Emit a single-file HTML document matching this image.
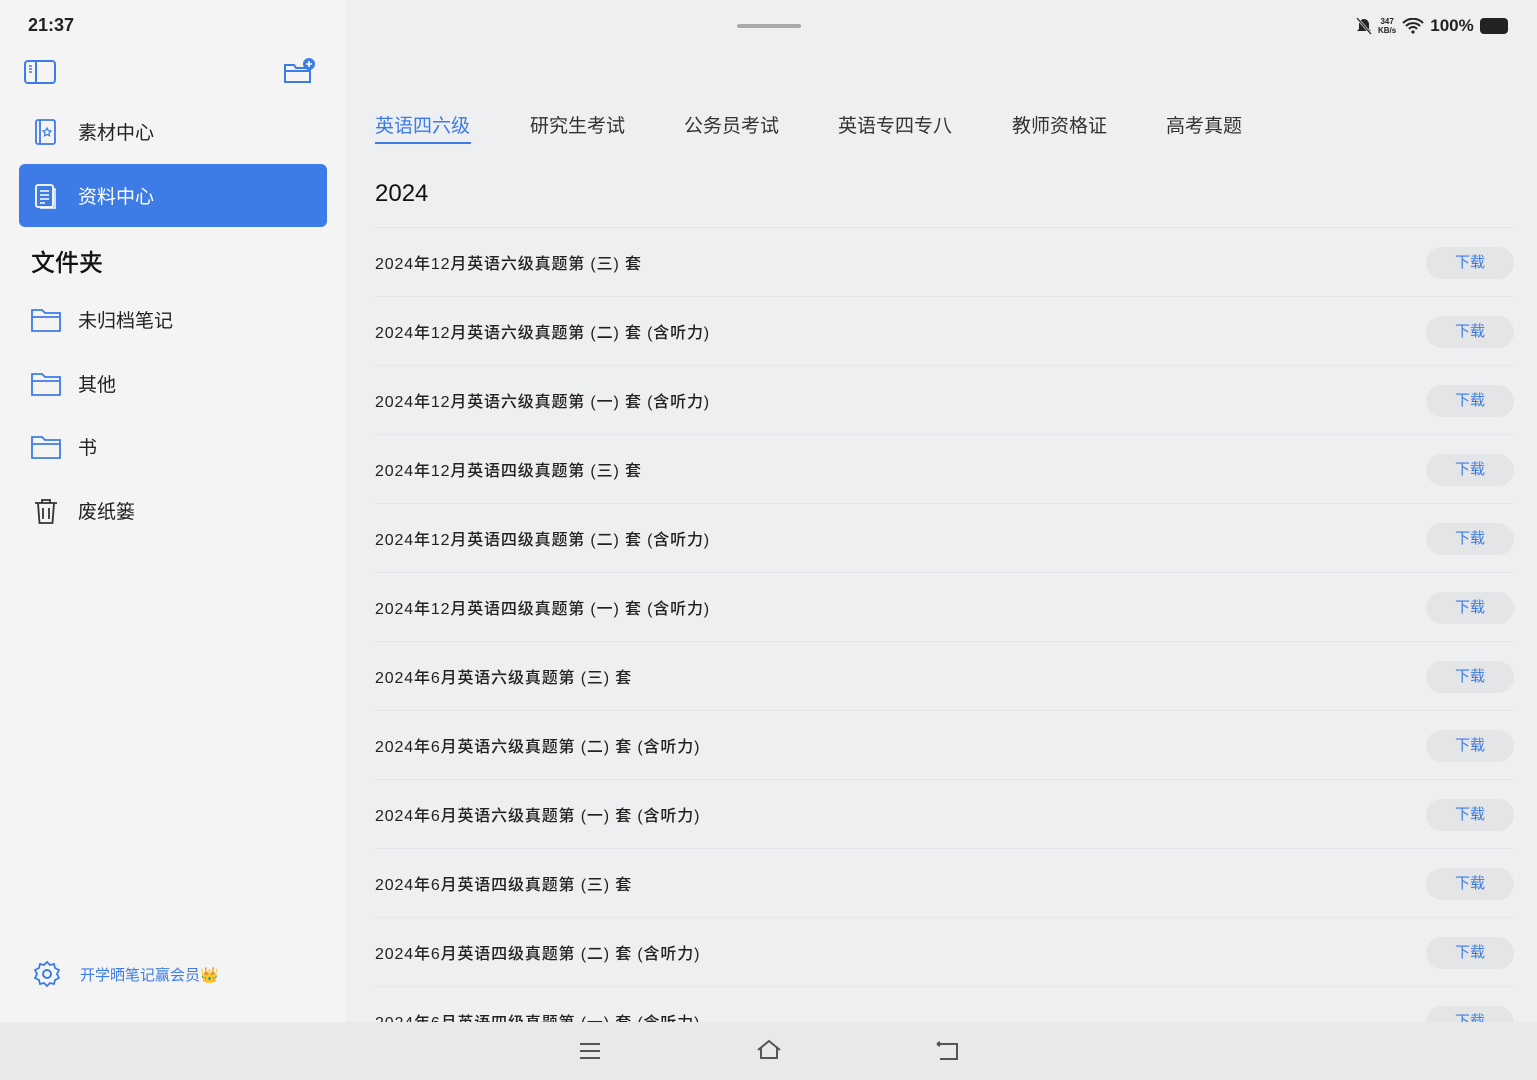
<!DOCTYPE html>
<html><head><meta charset="utf-8"><style>
*{margin:0;padding:0;box-sizing:border-box}
body{width:1537px;height:1080px;overflow:hidden;font-family:"Liberation Sans","Noto Sans CJK SC",sans-serif;background:#eeeff1;position:relative;color:#222}
.side{position:absolute;left:0;top:0;width:346px;height:1022px;background:#f4f4f5}
.abs{position:absolute}
.item{position:absolute;left:19px;width:308px;height:63px;display:flex;align-items:center;font-size:19px;color:#222}
.item svg{margin-left:13px;margin-right:20px}
.sel{background:#3d7be6;border-radius:6px;color:#fff}
.tabs span{position:absolute;top:111px;font-size:19px;color:#333}
.row{position:absolute;left:375px;width:1139px;height:69px;border-top:1px solid #e4e5e8}
.row .t{position:absolute;left:0;top:22px;font-size:16px;color:#222;letter-spacing:.85px;font-weight:500}
.row .b{position:absolute;right:0;top:19px;width:88px;height:32px;border-radius:16px;background:#e4e5e7;color:#3d7be6;font-size:15px;text-align:center;line-height:32px}
.nav{position:absolute;left:0;top:1022px;width:1537px;height:58px;background:#e9e9ea}
</style></head><body>
<div class="side">
<div class="abs" style="left:28px;top:15px;font-size:18px;font-weight:bold;color:#222">21:37</div>
<svg class="abs" style="left:24px;top:60px" width="32" height="24" viewBox="0 0 32 24"><rect x="1" y="1" width="30" height="22" rx="3" fill="none" stroke="#3d7be6" stroke-width="2"/><line x1="12" y1="1" x2="12" y2="23" stroke="#3d7be6" stroke-width="2"/><line x1="5" y1="6" x2="8" y2="6" stroke="#3d7be6" stroke-width="1.5"/><line x1="5" y1="9" x2="8" y2="9" stroke="#3d7be6" stroke-width="1.5"/><line x1="5" y1="12" x2="8" y2="12" stroke="#3d7be6" stroke-width="1.5"/></svg>
<svg class="abs" style="left:282px;top:57px" width="36" height="28" viewBox="0 0 36 28"><path d="M3 8h9l2 3h14v14H3z" fill="none" stroke="#3d7be6" stroke-width="2"/><line x1="3" y1="14" x2="28" y2="14" stroke="#3d7be6" stroke-width="2"/><circle cx="27" cy="7" r="6" fill="#3d7be6"/><path d="M27 4v6M24 7h6" stroke="#fff" stroke-width="1.6"/></svg>
<div class="item" style="top:100px"><svg width="26" height="28" viewBox="0 0 26 28"><rect x="4" y="2" width="19" height="24" rx="2" fill="none" stroke="#3d7be6" stroke-width="1.8"/><line x1="8" y1="2" x2="8" y2="26" stroke="#3d7be6" stroke-width="1.8"/><path d="M15 10l1.3 2.6 2.7.4-2 2 .5 2.8-2.5-1.3-2.5 1.3.5-2.8-2-2 2.7-.4z" fill="none" stroke="#3d7be6" stroke-width="1.2"/></svg>素材中心</div>
<div class="item sel" style="top:164px"><svg width="26" height="28" viewBox="0 0 26 28"><rect x="4" y="3" width="17" height="22" rx="2" fill="none" stroke="#fff" stroke-width="1.8"/><path d="M21 7h2v19H8" fill="none" stroke="#fff" stroke-width="1.5"/><path d="M8 9h9M8 13h9M8 17h9M8 21h5" stroke="#fff" stroke-width="1.5"/></svg>资料中心</div>
<div class="abs" style="left:31px;top:243px;font-size:24px;font-weight:500;color:#111">文件夹</div>
<div class="item" style="top:288px;left:19px"><svg width="32" height="26" viewBox="0 0 32 26" style="margin-left:11px;margin-right:16px"><path d="M2 3h10l3 3h15v18H2z" fill="none" stroke="#3d7be6" stroke-width="1.8"/><line x1="2" y1="10" x2="30" y2="10" stroke="#3d7be6" stroke-width="1.8"/></svg>未归档笔记</div>
<div class="item" style="top:352px"><svg width="32" height="26" viewBox="0 0 32 26" style="margin-left:11px;margin-right:16px"><path d="M2 3h10l3 3h15v18H2z" fill="none" stroke="#3d7be6" stroke-width="1.8"/><line x1="2" y1="10" x2="30" y2="10" stroke="#3d7be6" stroke-width="1.8"/></svg>其他</div>
<div class="item" style="top:415px"><svg width="32" height="26" viewBox="0 0 32 26" style="margin-left:11px;margin-right:16px"><path d="M2 3h10l3 3h15v18H2z" fill="none" stroke="#3d7be6" stroke-width="1.8"/><line x1="2" y1="10" x2="30" y2="10" stroke="#3d7be6" stroke-width="1.8"/></svg>书</div>
<div class="item" style="top:479px"><svg width="28" height="28" viewBox="0 0 28 28" style="margin-left:13px;margin-right:18px"><path d="M3 6h22M10 6V3h8v3M6 6l1.5 20h13L22 6M11 11v11M17 11v11" fill="none" stroke="#333" stroke-width="1.8"/></svg>废纸篓</div>
<svg class="abs" style="left:33px;top:960px" width="28" height="28" viewBox="0 0 28 28"><circle cx="14" cy="14" r="4" fill="none" stroke="#3d7be6" stroke-width="2"/><path d="M14 2l3 3 4-1 1 4 4 2-2 4 2 4-4 2-1 4-4-1-3 3-3-3-4 1-1-4-4-2 2-4-2-4 4-2 1-4 4 1z" fill="none" stroke="#3d7be6" stroke-width="1.8"/></svg>
<div class="abs" style="left:80px;top:964px;font-size:15px;color:#3d7be6">开学晒笔记赢会员<span style="color:#e8b830">👑</span></div>
</div>
<div class="abs" style="left:737px;top:24px;width:64px;height:4px;border-radius:2px;background:#aaa"></div>
<div class="abs" style="left:1356px;top:16px;font-size:17px;color:#222;display:flex;align-items:center;gap:6px">
<svg width="16" height="18" viewBox="0 0 16 18"><path d="M8 2a5 5 0 015 5v5l2 2H1l2-2V7a5 5 0 015-5z M6 16h4" fill="#222"/><line x1="1" y1="1" x2="15" y2="17" stroke="#eeeff1" stroke-width="2.5"/><line x1="1" y1="1" x2="15" y2="17" stroke="#222" stroke-width="1.3"/></svg>
<span style="font-size:8px;line-height:9px;text-align:center;font-weight:bold">347<br>KB/s</span>
<svg width="22" height="16" viewBox="0 0 22 16"><path d="M1 5a14 14 0 0120 0M4 8a10 10 0 0114 0M7 11a5 5 0 018 0" fill="none" stroke="#222" stroke-width="2"/><circle cx="11" cy="14" r="1.6" fill="#222"/></svg>
<span style="font-weight:bold">100%</span>
<div style="width:28px;height:16px;border-radius:4px;background:#222"></div></div>
<div class="tabs">
<span style="left:375px;color:#3d7be6">英语四六级</span>
<div class="abs" style="left:375px;top:142px;width:96px;height:2px;background:#3d7be6"></div>
<span style="left:530px">研究生考试</span><span style="left:684px">公务员考试</span><span style="left:838px">英语专四专八</span><span style="left:1012px">教师资格证</span><span style="left:1166px">高考真题</span></div>
<div class="abs" style="left:375px;top:180px;font-size:24px;color:#111">2024</div>
<div class="row" style="top:227px"><div class="t">2024年12月英语六级真题第 (三) 套</div><div class="b">下载</div></div>
<div class="row" style="top:296px"><div class="t">2024年12月英语六级真题第 (二) 套 (含听力)</div><div class="b">下载</div></div>
<div class="row" style="top:365px"><div class="t">2024年12月英语六级真题第 (一) 套 (含听力)</div><div class="b">下载</div></div>
<div class="row" style="top:434px"><div class="t">2024年12月英语四级真题第 (三) 套</div><div class="b">下载</div></div>
<div class="row" style="top:503px"><div class="t">2024年12月英语四级真题第 (二) 套 (含听力)</div><div class="b">下载</div></div>
<div class="row" style="top:572px"><div class="t">2024年12月英语四级真题第 (一) 套 (含听力)</div><div class="b">下载</div></div>
<div class="row" style="top:641px"><div class="t">2024年6月英语六级真题第 (三) 套</div><div class="b">下载</div></div>
<div class="row" style="top:710px"><div class="t">2024年6月英语六级真题第 (二) 套 (含听力)</div><div class="b">下载</div></div>
<div class="row" style="top:779px"><div class="t">2024年6月英语六级真题第 (一) 套 (含听力)</div><div class="b">下载</div></div>
<div class="row" style="top:848px"><div class="t">2024年6月英语四级真题第 (三) 套</div><div class="b">下载</div></div>
<div class="row" style="top:917px"><div class="t">2024年6月英语四级真题第 (二) 套 (含听力)</div><div class="b">下载</div></div>
<div class="row" style="top:986px"><div class="t">2024年6月英语四级真题第 (一) 套 (含听力)</div><div class="b">下载</div></div>
<div class="nav">
<svg class="abs" style="left:579px;top:20px" width="22" height="18" viewBox="0 0 22 18"><path d="M1 2h20M1 9h20M1 16h20" stroke="#555" stroke-width="2"/></svg>
<svg class="abs" style="left:756px;top:17px" width="26" height="22" viewBox="0 0 26 22"><path d="M2 11L13 2l11 9M5 9v10h16V9" fill="none" stroke="#555" stroke-width="2"/></svg>
<svg class="abs" style="left:935px;top:19px" width="24" height="20" viewBox="0 0 24 20"><path d="M2 3h20v15H5M2 3l3-2M2 3l3 2" fill="none" stroke="#555" stroke-width="2"/></svg>
</div>
</body></html>
